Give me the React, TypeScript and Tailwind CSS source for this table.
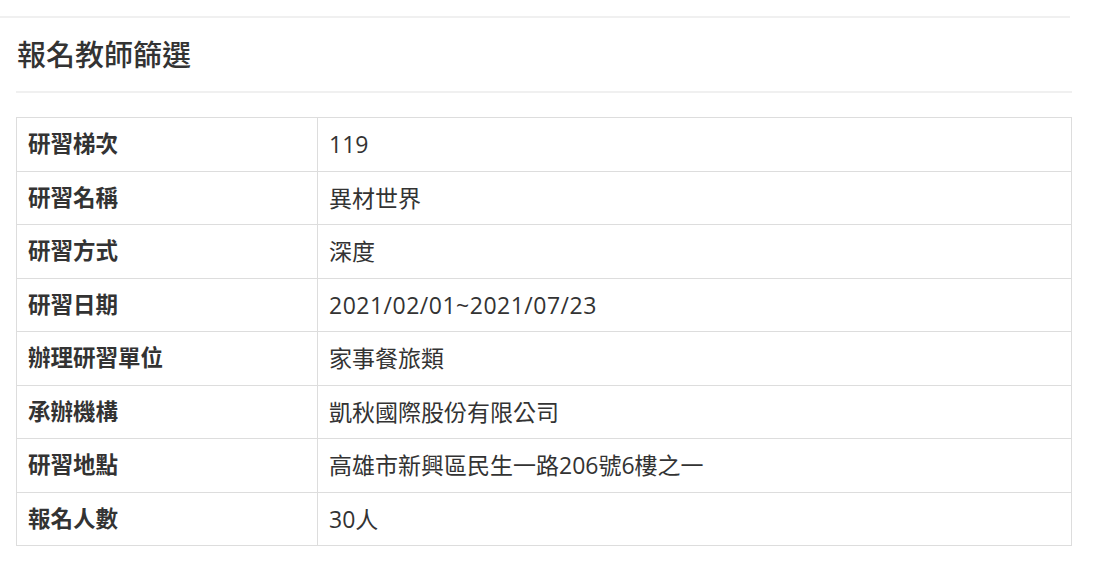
const rows: { label: string; value: string; wide?: boolean }[] = [
  { label: "研習梯次", value: "119" },
  { label: "研習名稱", value: "異材世界" },
  { label: "研習方式", value: "深度" },
  { label: "研習日期", value: "2021/02/01~2021/07/23", wide: true },
  { label: "辦理研習單位", value: "家事餐旅類" },
  { label: "承辦機構", value: "凱秋國際股份有限公司" },
  { label: "研習地點", value: "高雄市新興區民生一路206號6樓之一" },
  { label: "報名人數", value: "30人" },
];

export default function App() {
  return (
    <div
      className="w-[1094px] h-[562px] bg-white text-[#333]"
      style={{ fontFamily: '"Open Sans", "Noto Sans CJK TC", sans-serif' }}
    >
      <div className="pt-[16px] w-[1070px]">
        <div className="border-t-2 border-[#f0f0f0]" />
      </div>
      <div className="ml-[16px] w-[1056px]">
        <h2 className="h-[73px] flex items-center pl-[1px] text-[29px] leading-none font-medium">報名教師篩選</h2>
        <div className="border-t-2 border-[#f0f0f0]" />
        <table className="mt-[24px] w-[1056px] border-collapse border border-[#ddd] text-[23px]">
          <tbody>
            {rows.map((row) => (
              <tr key={row.label} className="h-[53.5px]">
                <td className="w-[301px] border border-[#ddd] pl-[11px] text-[22.5px] font-bold align-middle">
                  {row.label}
                </td>
                <td className={`border border-[#ddd] pl-[11px] align-middle ${row.wide ? "tracking-[0.5px]" : ""}`}>
                  {row.value}
                </td>
              </tr>
            ))}
          </tbody>
        </table>
      </div>
    </div>
  );
}
